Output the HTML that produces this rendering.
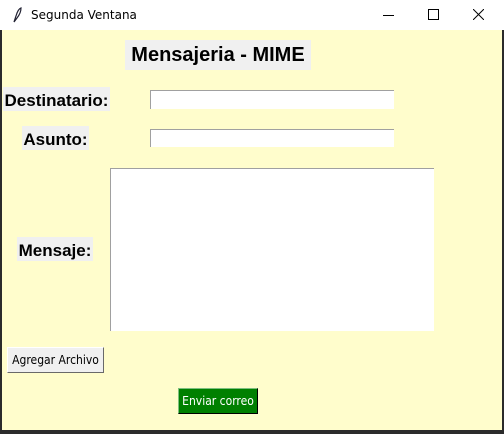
<html><head><style>
body{margin:0;width:504px;height:434px;overflow:hidden;background:#2b2b2b;font-family:"Liberation Sans",sans-serif;position:relative}
.tb{position:absolute;left:0;top:0;width:504px;height:30px;background:#fff}
.main{position:absolute;left:2px;top:30px;width:500px;height:400px;background:#fffdcc}
.a{position:absolute}
.lbl{position:absolute;background:#f0f0f0;font-weight:bold;font-size:17px;color:#000;line-height:27px;text-align:center}
.ent{position:absolute;background:#fff;border-top:1px solid #a0a0a0;border-left:1px solid #a0a0a0;box-sizing:border-box}
</style></head><body>
<div class="tb">
<svg class="a" style="left:12px;top:7px" width="10" height="16" viewBox="0 0 10 16"><path d="M2 15 L4 9 Q6 2 9 1 Q9 6 5 11 Z" fill="none" stroke="#223" stroke-width="1.2"/></svg>
<div class="a" style="left:31px;top:8px;font-size:12px;font-family:'DejaVu Sans','Liberation Sans',sans-serif;color:#000">Segunda Ventana</div>
<div class="a" style="left:383px;top:15px;width:11px;height:1px;background:#000"></div>
<div class="a" style="left:428px;top:9px;width:9px;height:9px;border:1px solid #000"></div>
<svg class="a" style="left:473px;top:9px" width="11" height="11"><path d="M0 0L11 11M11 0L0 11" stroke="#000" stroke-width="1"/></svg>
</div>
<div class="main"></div>
<div class="lbl" style="left:125px;top:40px;width:186px;height:30px;font-size:20px;line-height:31px">Mensajeria - MIME</div>
<div class="lbl" style="left:3px;top:87px;width:107px;height:24px;overflow:hidden">Destinatario:</div>
<div class="ent" style="left:150px;top:90px;width:244px;height:19px"></div>
<div class="lbl" style="left:22px;top:126px;width:67px;height:24px;overflow:hidden">Asunto:</div>
<div class="ent" style="left:150px;top:129px;width:244px;height:18px"></div>
<div class="lbl" style="left:17px;top:237px;width:76px;height:24px;overflow:hidden">Mensaje:</div>
<div class="ent" style="left:110px;top:168px;width:324px;height:163px"></div>
<div class="a" style="left:7px;top:347px;width:97px;height:26px;box-sizing:border-box;background:#f0f0f0;border:1px solid;border-color:#fff #696969 #696969 #fff;font-size:12px;line-height:24px;text-align:center;font-family:'DejaVu Sans Condensed','Liberation Sans Narrow',sans-serif">Agregar Archivo</div>
<div class="a" style="left:178px;top:388px;width:80px;height:26px;box-sizing:border-box;background:#008000;border:1px solid;border-color:#7fbf7f #000 #000 #7fbf7f;color:#fff;font-size:12px;line-height:24px;text-align:center;font-family:'DejaVu Sans Condensed','Liberation Sans Narrow',sans-serif">Enviar correo</div>
</body></html>
